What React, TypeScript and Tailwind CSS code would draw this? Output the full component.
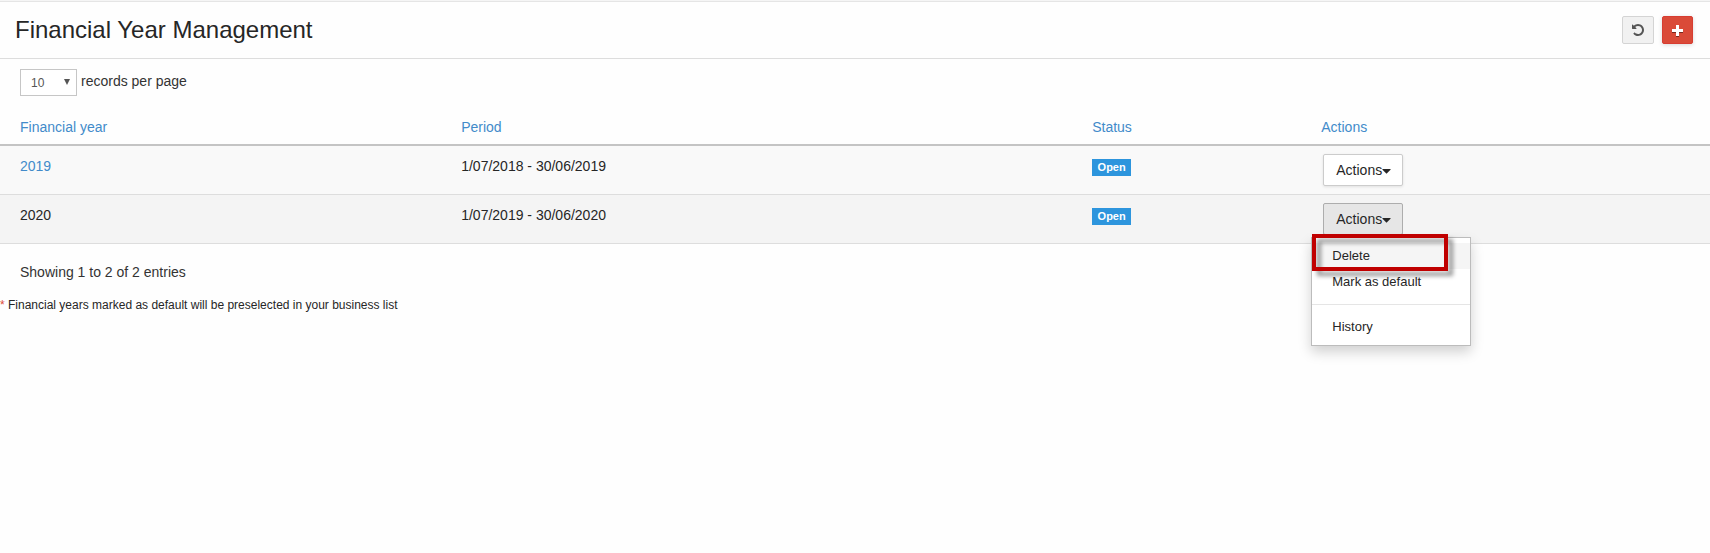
import { useState } from "react";

type FinancialYear = {
  year: string;
  period: string;
  status: string;
  linked: boolean;
};

const YEARS: FinancialYear[] = [
  { year: "2019", period: "1/07/2018 - 30/06/2019", status: "Open", linked: true },
  { year: "2020", period: "1/07/2019 - 30/06/2020", status: "Open", linked: false },
];

function UndoIcon() {
  return (
    <svg viewBox="0 0 1792 1792" className="size-3.5" fill="currentColor" aria-hidden>
      <path d="M1664 896q0 156-61 298t-164 245-245 164-298 61q-172 0-327-72.5t-264-204.5q-7-10-6.5-22.5t8.5-20.5l137-138q10-9 25-9 16 2 23 12 73 95 179 147t225 52q104 0 198.5-40.5t163.5-109.5 109.5-163.5 40.5-198.5-40.5-198.5-109.5-163.5-163.5-109.5-198.5-40.5q-98 0-188 35.5t-160 101.5l137 138q31 30 14 69-17 40-59 40h-448q-26 0-45-19t-19-45v-448q0-42 40-59 39-17 69 14l130 129q107-101 244.5-156.5t284.5-55.5q156 0 298 61t245 164 164 245 61 298z" />
    </svg>
  );
}

function PlusIcon() {
  return (
    <svg
      viewBox="0 0 11 11"
      className="size-[11px] drop-shadow-[0_1px_0_rgba(0,0,0,0.45)]"
      fill="currentColor"
      aria-hidden
    >
      <path d="M4 0h3v4h4v3H7v4H4V7H0V4h4z" />
    </svg>
  );
}

function Caret() {
  return (
    <svg viewBox="0 0 9 5" className="mt-0.5 h-[5px] w-[9px]" fill="currentColor" aria-hidden>
      <path d="M0.5 0h8v0.8L4.5 4.8 0.5 0.8z" />
    </svg>
  );
}

function ActionsMenu() {
  const item = "block h-[26px] w-full pl-5 text-left text-[13px] leading-[26px] hover:bg-[#f5f5f5]";
  return (
    <div className="absolute top-full -left-3 z-10 mt-0.5 w-40 border border-[#bcbcbc] bg-white py-[5px] text-[#262626] shadow-[0_6px_12px_rgba(0,0,0,0.18)]">
      <button type="button" className={`${item} bg-[#f5f5f5]`}>
        Delete
      </button>
      <button type="button" className={item}>
        Mark as default
      </button>
      <hr className="my-[9px] border-[#e5e5e5]" />
      <button type="button" className={item}>
        History
      </button>
      <div className="pointer-events-none absolute -top-1 left-0 h-[37px] w-[136px] border-4 border-[#c00000] drop-shadow-[5px_5px_2px_rgba(0,0,0,0.4)]" />
    </div>
  );
}

export default function App() {
  const [openYear, setOpenYear] = useState<string | null>("2020");

  return (
    <div className="min-h-screen border-t border-[#f5f5f5] bg-[#fefefe] font-['Liberation_Sans',Arial,sans-serif] text-sm text-[#262626]">
      <header className="flex h-[58px] items-center justify-between border-y border-t-[#e5e5e5] border-b-[#dddddd] pr-[17px] pl-[15px]">
        <h1 className="text-2xl leading-7">Financial Year Management</h1>
        <div className="flex gap-2">
          <button
            type="button"
            aria-label="Refresh"
            className="flex h-7 w-8 items-center justify-center rounded-xs border border-[#d4d4d4] bg-[#f1f1f1] text-[#555555]"
          >
            <UndoIcon />
          </button>
          <button
            type="button"
            aria-label="Add financial year"
            className="flex h-7 w-[31px] items-center justify-center rounded-xs border border-[#d73d32] bg-[#da4a38] text-white shadow-[0_1px_4px_rgba(0,0,0,0.15)]"
          >
            <PlusIcon />
          </button>
        </div>
      </header>

      <main>
        <div className="flex items-center gap-1 pt-2.5 pl-5 text-[#333333]">
          <div className="relative">
            <select
              id="page-size"
              defaultValue="10"
              className="block h-[27px] w-[57px] appearance-none border border-[#c6c6c6] bg-white pl-2.5 text-xs text-[#555555]"
            >
              <option>10</option>
              <option>25</option>
              <option>50</option>
            </select>
            <svg
              viewBox="0 0 6 6"
              className="pointer-events-none absolute top-2.5 right-[7px] size-1.5"
              fill="#555555"
              aria-hidden
            >
              <path d="M0 0h6L3 6z" />
            </svg>
          </div>
          <label htmlFor="page-size" className="pb-1 leading-5">
            records per page
          </label>
        </div>

        <table className="mt-[15px] w-full table-fixed border-collapse text-left">
          <colgroup>
            <col className="w-[25.8%]" />
            <col className="w-[36.9%]" />
            <col className="w-[13.4%]" />
            <col />
          </colgroup>
          <thead>
            <tr className="h-[34px] border-b-2 border-[#c4c4c4] text-[#428bca]">
              {["Financial year", "Period", "Status", "Actions"].map((name) => (
                <th key={name} className="pb-0.5 pl-5 font-normal">
                  {name}
                </th>
              ))}
            </tr>
          </thead>
          <tbody>
            {YEARS.map((row) => {
              const isOpen = openYear === row.year;
              return (
                <tr
                  key={row.year}
                  className="border-b border-[#dddddd] bg-[#f9f9f9] align-top even:bg-[#f4f4f4]"
                >
                  <td className="py-2.5 pl-5 leading-5">
                    {row.linked ? (
                      <a href="#" className="text-[#428bca]">
                        {row.year}
                      </a>
                    ) : (
                      row.year
                    )}
                  </td>
                  <td className="py-2.5 pl-5 leading-5">{row.period}</td>
                  <td className="py-[13px] pl-5">
                    <span className="flex h-[17px] w-[39px] items-center justify-center bg-[#2d95dd] text-[11px] font-bold text-white">
                      {row.status}
                    </span>
                  </td>
                  <td className="py-2 pl-[22px]">
                    <div className="relative w-fit">
                      <button
                        type="button"
                        aria-expanded={isOpen}
                        onClick={() => setOpenYear(isOpen ? null : row.year)}
                        className={`flex h-8 w-20 items-center rounded-xs border pl-3 ${
                          isOpen
                            ? "border-[#adadad] bg-[#e6e6e6]"
                            : "border-[#cccccc] bg-white shadow-[0_1px_3px_rgba(0,0,0,0.1)]"
                        }`}
                      >
                        Actions
                        <Caret />
                      </button>
                      {isOpen && <ActionsMenu />}
                    </div>
                  </td>
                </tr>
              );
            })}
          </tbody>
        </table>

        <p className="mt-[18px] pl-5 leading-5 text-[#333333]">Showing 1 to 2 of 2 entries</p>
        <p className="mt-[13px] text-xs leading-5">
          <span className="text-[#dd4b39]">*</span> Financial years marked as default will be
          preselected in your business list
        </p>
      </main>
    </div>
  );
}
